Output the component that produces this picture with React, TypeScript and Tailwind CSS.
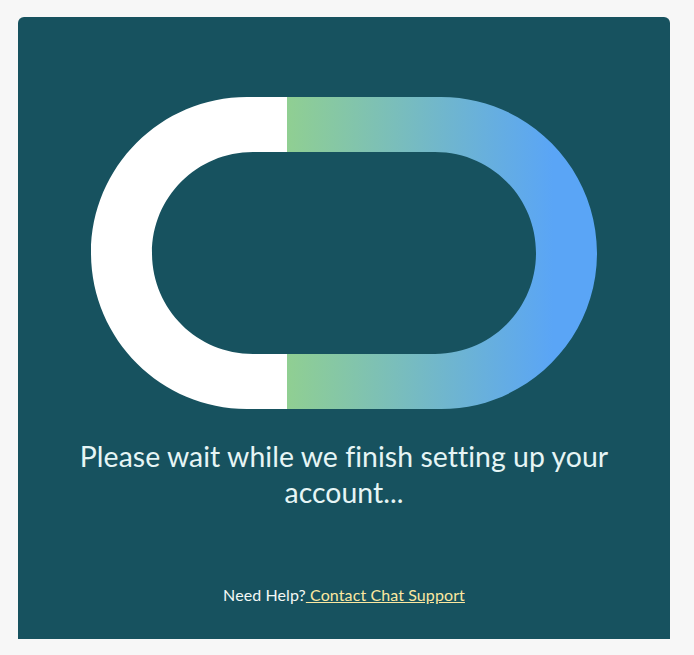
export default function App() {
  return (
    <div className="min-h-[655px] bg-[#f7f7f7] pl-[18px] pt-[17px] font-['Lato',sans-serif]">
      <div className="flex h-[622px] w-[652px] flex-col items-center rounded-t-[6px] bg-[#17525f] pt-[80px]">
        <svg width="506" height="312" viewBox="0 0 506 312" className="block shrink-0">
          <defs>
            <linearGradient id="g" gradientUnits="userSpaceOnUse" x1="196" y1="0" x2="462" y2="0">
              <stop offset="0" stopColor="#90cf92" />
              <stop offset="1" stopColor="#5aa5f6" />
            </linearGradient>
          </defs>
          <path d="M196 0H156C70 0 0 70 0 156s70 156 156 156h40v-55h-34c-56 0-101-45-101-101s45-101 101-101h34z" fill="#ffffff" />
          <path d="M196 0H350C436 0 506 70 506 156s-70 156-156 156H196v-55H344c56 0 101-45 101-101S400 55 344 55H196z" fill="url(#g)" />
        </svg>
        <p className="mt-[29px] w-[560px] text-center text-[28.4px] leading-[36px] tracking-[0.05px] text-[#e6f5f5]">
          Please wait while we finish setting up your account...
        </p>
        <p className="mt-[73px] text-center text-[16px] leading-[24px] tracking-[0.1px] text-[#f3f8f5]">
          Need Help?
          <a href="#" className="text-[#fce8a0] underline"> Contact Chat Support</a>
        </p>
      </div>
    </div>
  );
}
